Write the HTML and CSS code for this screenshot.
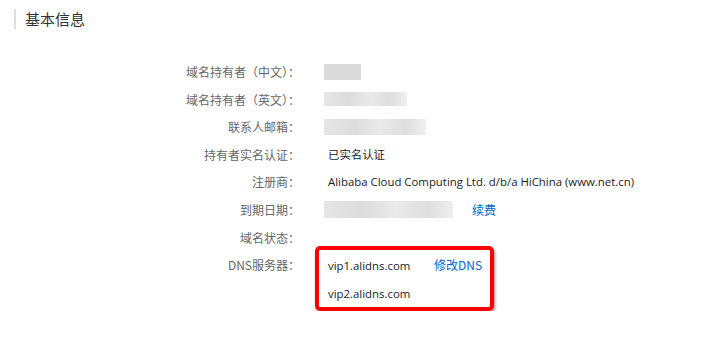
FILE: index.html
```html
<!DOCTYPE html>
<html lang="zh-CN">
  <head>
    <meta charset="UTF-8" />
    <title>基本信息</title>
    <link rel="stylesheet" href="styles.css">
  </head>
  <body>
    <div class="info_panel">
      <h2 class="info_title">基本信息</h2>
      <ul class="info_list">
        <li class="info_row">
          <span class="info_label">域名持有者（中文）：</span>
          <span class="info_value"><i class="mask mask_1"></i></span>
        </li>
        <li class="info_row">
          <span class="info_label">域名持有者（英文）：</span>
          <span class="info_value"><i class="mask mask_2"></i></span>
        </li>
        <li class="info_row">
          <span class="info_label">联系人邮箱：</span>
          <span class="info_value"><i class="mask mask_3"></i></span>
        </li>
        <li class="info_row">
          <span class="info_label">持有者实名认证：</span>
          <span class="info_value">已实名认证</span>
        </li>
        <li class="info_row">
          <span class="info_label">注册商：</span>
          <span class="info_value">Alibaba Cloud Computing Ltd. d/b/a HiChina (www.net.cn)</span>
        </li>
        <li class="info_row">
          <span class="info_label">到期日期：</span>
          <span class="info_value"><i class="mask mask_4"></i><a class="info_link renew_link">续费</a></span>
        </li>
        <li class="info_row">
          <span class="info_label">域名状态：</span>
          <span class="info_value"></span>
        </li>
        <li class="info_row dns_row">
          <span class="info_label">DNS服务器：</span>
          <div class="dns_list">
            <div class="dns_item"><span class="dns_name">vip1.alidns.com</span><a class="info_link">修改DNS</a></div>
            <div class="dns_item"><span class="dns_name">vip2.alidns.com</span></div>
          </div>
        </li>
      </ul>
    </div>
  </body>
</html>
```

FILE: styles.css
```css
body {
  margin: 0;
  background: #fff;
  font-family: "Open Sans", "Noto Sans CJK SC", sans-serif;
}

.info_panel {
  padding: 9px 0 0 14px;
}

.info_title {
  margin: 0;
  padding-left: 9px;
  border-left: 2px solid #ddd;
  font-size: 15px;
  font-weight: normal;
  line-height: 20px;
  color: #333;
  font-family: "Noto Sans CJK SC", sans-serif;
}

.info_list {
  list-style: none;
  margin: 29px 0 0;
  padding: 0;
}

.info_row {
  display: flex;
  line-height: 27.6px;
  font-size: 11.4px;
}

.info_label {
  width: 286px;
  text-align: right;
  color: #666;
  font-size: 12px;
  font-family: "Noto Sans CJK SC", sans-serif;
}

.info_value {
  margin-left: 28px;
  color: #222;
  display: flex;
  align-items: center;
  min-height: 27.6px;
}

.mask {
  display: inline-block;
  margin-left: -4px;
  background: linear-gradient(90deg, #e6e6e6, #dcdcdc 30%, #eaeaea 55%, #dedede 80%, #efefef);
}

.mask_1 { width: 37px; height: 16px; background: #dadada; }
.mask_2 { width: 83px; height: 14px; }
.mask_3 { width: 102px; height: 16px; }
.mask_4 { width: 129px; height: 17px; }

.info_link {
  color: #06c;
  cursor: pointer;
  font-size: 12px;
  font-family: "Noto Sans CJK SC", sans-serif;
}

.renew_link {
  margin-left: 19px;
}

.dns_list {
  box-sizing: border-box;
  width: 179px;
  margin: -5px 0 0 15px;
  padding: 1px 0 0 9px;
  border: 4px solid #f00;
  border-radius: 5px;
  box-shadow: 1px 2px 3px rgba(0, 0, 0, 0.45);
  color: #222;
}

.dns_item {
  line-height: 27.6px;
}

.dns_name {
  display: inline-block;
  width: 106px;
}
```
